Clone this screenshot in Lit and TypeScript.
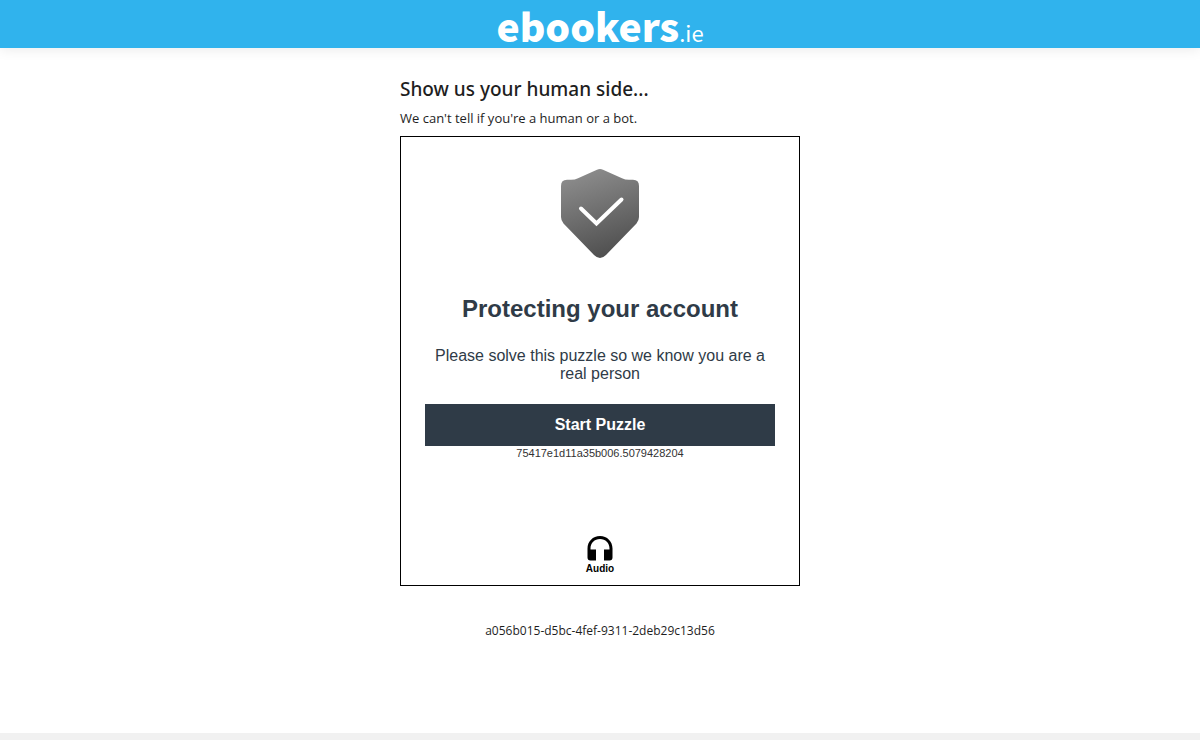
import { LitElement, html, css } from "lit";
import { customElement } from "lit/decorators.js";

@customElement("site-header")
export class SiteHeader extends LitElement {
  static styles = css`
    :host { display: block; }
    header {
      display: flex;
      justify-content: center;
      height: 48px;
      background: #30b3ed;
      box-shadow: 0 2px 12px rgba(0, 0, 0, 0.08);
    }
    .logo {
      color: #fff;
      font: 900 39px/50px "Noto Sans CJK SC", "Open Sans", sans-serif;
      text-decoration: none;
      white-space: nowrap;
    }
    .tld { font-size: 22px; font-weight: 400; line-height: 22px; }
  `;

  render() {
    return html`
      <header>
        <a class="logo" href="#">ebookers<span class="tld">.ie</span></a>
      </header>
    `;
  }
}

@customElement("puzzle-card")
export class PuzzleCard extends LitElement {
  static styles = css`
    :host { display: block; }
    .card {
      display: flex;
      flex-direction: column;
      align-items: center;
      padding: 32px 24px 10px;
      border: 1px solid #000;
      color: #2f3b47;
      font-family: "Liberation Sans", Arial, sans-serif;
      text-align: center;
    }
    .shield { display: block; width: 78px; height: 90px; }
    h2 { margin: 36px 0 0; font-size: 24px; line-height: 28px; font-weight: 700; }
    p { margin: 24px 0 0; font-size: 16px; line-height: 18px; }
    .start {
      align-self: stretch;
      height: 42px;
      margin-top: 21px;
      padding: 0;
      border: 0;
      background: #2f3b47;
      color: #fff;
      font: 700 16px/18px "Liberation Sans", Arial, sans-serif;
      cursor: pointer;
    }
    .code { font-size: 11px; line-height: 14px; color: #333; }
    .audio {
      display: flex;
      flex-direction: column;
      align-items: center;
      gap: 2px;
      margin-top: 76px;
      padding: 0;
      border: 0;
      background: none;
      color: #000;
      font: 700 10px/12px "Liberation Sans", Arial, sans-serif;
      cursor: pointer;
    }
    .audio svg { display: block; width: 26px; height: 25px; }
  `;

  render() {
    return html`
      <section class="card">
        <svg class="shield" viewBox="0 0 78 90" aria-hidden="true">
          <defs>
            <linearGradient id="steel" x1="0.35" y1="0" x2="0.65" y2="1">
              <stop offset="0" stop-color="#8c8c8c" />
              <stop offset="1" stop-color="#4d4d4d" />
            </linearGradient>
          </defs>
          <path
            fill="url(#steel)"
            d="M36 0.8Q39 -0.6 42 0.8L61 9.2Q64 10.8 68 10.8H72Q78 10.8 78 17V48Q78 51.500 75.500 54.500L45 86Q39 92 33 86L2.500 54.500Q0 51.500 0 48V17Q0 10.800 6 10.800H10Q14 10.800 17 9.200Z"
          />
          <path
            fill="none"
            stroke="#fff"
            stroke-width="4"
            stroke-linecap="round"
            stroke-linejoin="miter"
            d="M20 39.500L35.500 54.500L60.500 30.500"
          />
        </svg>
        <h2>Protecting your account</h2>
        <p>Please solve this puzzle so we know you are a real person</p>
        <button class="start" type="button">Start Puzzle</button>
        <div class="code">75417e1d11a35b006.5079428204</div>
        <button class="audio" type="button">
          <svg viewBox="0 0 26 25" aria-hidden="true">
            <path
              d="M13 0C5.800 0 0.500 5.500 0.500 12.500V21.500Q0.500 24.500 3.500 24.500H9V13.500H3.500V12.500C3.500 7 7.500 3 13 3S22.500 7 22.500 12.500V13.500H17V24.500H22.500Q25.500 24.500 25.500 21.500V12.500C25.500 5.500 20.200 0 13 0Z"
            />
          </svg>
          Audio
        </button>
      </section>
    `;
  }
}

@customElement("app-root")
export class AppRoot extends LitElement {
  static styles = css`
    :host {
      display: flex;
      flex-direction: column;
      min-height: 100vh;
      background: #fff;
      color: #1e1e1e;
      font-family: "Open Sans", "Noto Sans", sans-serif;
    }
    main {
      flex: 1;
      box-sizing: border-box;
      width: 100%;
      max-width: 400px;
      margin: 0 auto;
      padding-top: 28px;
    }
    h1 {
      margin: 0;
      font-family: "Noto Sans", "Open Sans", sans-serif;
      font-size: 19px;
      line-height: 26px;
      font-weight: 500;
    }
    .lead { margin: 6px 0 8px; font-size: 13px; line-height: 20px; }
    .session { margin: 36px 0; font-size: 12px; line-height: 18px; text-align: center; }
    footer { height: 7px; background: #f1f1f1; }
  `;

  render() {
    return html`
      <site-header></site-header>
      <main>
        <h1>Show us your human side...</h1>
        <p class="lead">We can't tell if you're a human or a bot.</p>
        <puzzle-card></puzzle-card>
        <p class="session">a056b015-d5bc-4fef-9311-2deb29c13d56</p>
      </main>
      <footer></footer>
    `;
  }
}
